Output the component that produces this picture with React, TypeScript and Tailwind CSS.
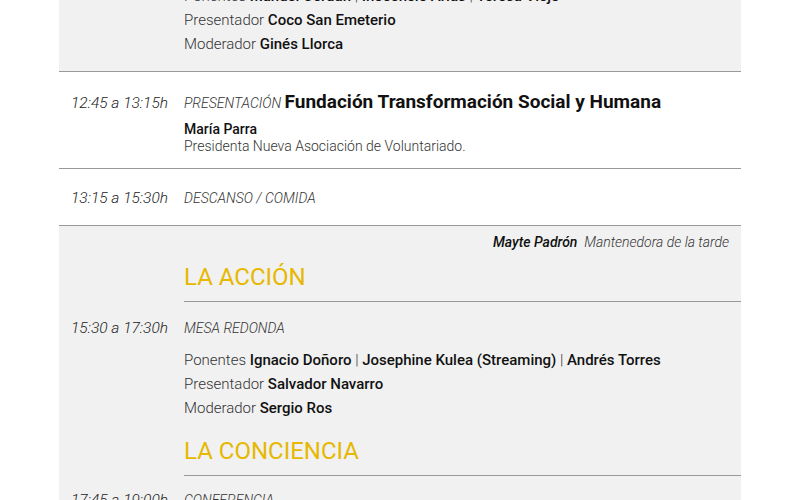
import React from "react";

const Label = ({ children }: { children: React.ReactNode }) => (
  <span className="font-light text-[#333]">{children}</span>
);

const Name = ({ children }: { children: React.ReactNode }) => (
  <span className="font-medium text-[#111]">{children}</span>
);

const Sep = () => <span className="font-light text-[#333]"> | </span>;

function Time({ children }: { children: React.ReactNode }) {
  return (
    <div className="w-[125px] shrink-0 pl-3 text-[15.5px] leading-6 font-light italic text-[#222]">
      {children}
    </div>
  );
}

function SectionHeading({ children }: { children: React.ReactNode }) {
  return (
    <div className="ml-[125px] border-b border-[#999] pb-2">
      <h2 className="text-[24px] leading-8 font-normal text-[#e6b800]">{children}</h2>
    </div>
  );
}

export default function App() {
  return (
    <div className="min-h-[500px] bg-white font-['Roboto',sans-serif] overflow-hidden">
      <div className="mx-auto w-[682px]">
        {/* tail of the morning round table */}
        <div className="-mt-4 flex bg-[#f1f1f1] pb-[15px] border-b border-[#999]">
          <div className="w-[125px] shrink-0" />
          <div className="text-[15px] leading-6">
            <div>
              <Label>Ponentes </Label>
              <Name>Manuel Cerdán</Name>
              <Sep />
              <Name>Inocencio Arias</Name>
              <Sep />
              <Name>Teresa Viejo</Name>
            </div>
            <div>
              <Label>Presentador </Label>
              <Name>Coco San Emeterio</Name>
            </div>
            <div>
              <Label>Moderador </Label>
              <Name>Ginés Llorca</Name>
            </div>
          </div>
        </div>

        {/* presentación */}
        <div className="flex items-baseline pt-[18px] pb-[13px] border-b border-[#999]">
          <Time>12:45 a 13:15h</Time>
          <div>
            <div className="leading-6">
              <span className="text-[14px] font-light italic uppercase text-[#333]">Presentación </span>
              <span className="text-[19px] font-bold text-[#111]">
                Fundación Transformación Social y Humana
              </span>
            </div>
            <div className="mt-[6px] text-[14px] leading-[17px]">
              <div className="font-medium text-[#111]">María Parra</div>
              <div className="font-light text-[#333]">Presidenta Nueva Asociación de Voluntariado.</div>
            </div>
          </div>
        </div>

        {/* descanso */}
        <div className="flex items-baseline pt-[17px] pb-[15px] border-b border-[#999]">
          <Time>13:15 a 15:30h</Time>
          <div className="text-[14px] leading-6 font-light italic text-[#333]">DESCANSO / COMIDA</div>
        </div>

        {/* tarde */}
        <div className="bg-[#f1f1f1] pt-1 pb-10">
          <div className="pr-3 text-right text-[14px] leading-6 italic">
            <span className="font-medium text-[#111]">Mayte Padrón</span>
            <span className="font-light text-[#333]">&nbsp; Mantenedora de la tarde</span>
          </div>

          <div className="mt-[7px]">
            <SectionHeading>LA ACCIÓN</SectionHeading>
          </div>

          <div className="flex items-baseline pt-[14px]">
            <Time>15:30 a 17:30h</Time>
            <div>
              <div className="text-[14px] leading-6 font-light italic text-[#333]">MESA REDONDA</div>
              <div className="mt-2 text-[15px] leading-6">
                <div>
                  <Label>Ponentes </Label>
                  <Name>Ignacio Doñoro</Name>
                  <Sep />
                  <Name>Josephine Kulea (Streaming)</Name>
                  <Sep />
                  <Name>Andrés Torres</Name>
                </div>
                <div>
                  <Label>Presentador </Label>
                  <Name>Salvador Navarro</Name>
                </div>
                <div>
                  <Label>Moderador </Label>
                  <Name>Sergio Ros</Name>
                </div>
              </div>
            </div>
          </div>

          <div className="mt-[15px]">
            <SectionHeading>LA CONCIENCIA</SectionHeading>
          </div>

          <div className="flex items-baseline pt-3">
            <Time>17:45 a 19:00h</Time>
            <div className="text-[14px] leading-6 font-light italic text-[#333]">CONFERENCIA</div>
          </div>
        </div>
      </div>
    </div>
  );
}
